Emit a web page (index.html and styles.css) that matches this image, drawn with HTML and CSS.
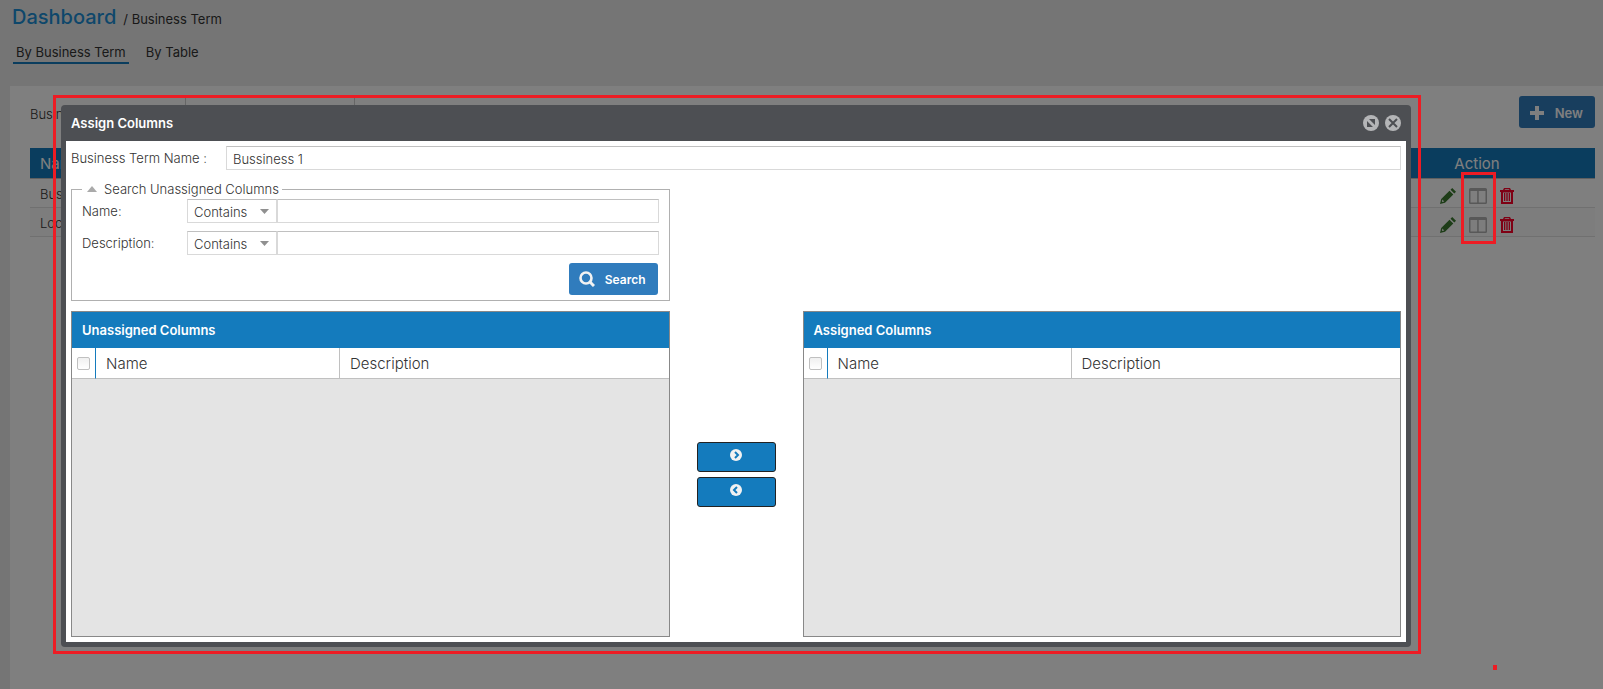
FILE: index.html
```
<!DOCTYPE html>
<html lang="en">

<head>
    <meta charset="UTF-8">
    <meta name="viewport" content="width=device-width, initial-scale=1.0">
    <title>Business Term</title>
    <link rel="stylesheet" href="styles.css">
</head>

<body>
    <svg class="defs" aria-hidden="true">
        <symbol id="pencil" viewBox="0 0 16 16">
            <path d="M10.500 1.700 12.200 0 16 3.800 14.300 5.500zM9.500 2.700 13.300 6.500 5 14.800 0 16 1.200 11zM2.400 11.600 1.900 14l2.300-.5z" fill-rule="evenodd" />
        </symbol>
        <symbol id="columns" viewBox="0 0 18 16">
            <path d="M1.500 0h15A1.500 1.500 0 0 1 18 1.500v13a1.500 1.500 0 0 1-1.500 1.500h-15A1.500 1.500 0 0 1 0 14.500v-13A1.500 1.500 0 0 1 1.500 0zM1.500 3v11.500h6.700V3zM9.700 3v11.500h6.800V3z" fill-rule="evenodd" />
        </symbol>
        <symbol id="trash" viewBox="0 0 14 16">
            <path d="M4 0h6l1 2h3v2h-1v12H1V4H0V2h3zM5 1.200 4.600 2h4.800L9 1.200zM3 4.500V14h8V4.500zM4 5h1.300v8H4zM6.300 5h1.400v8H6.300zM8.700 5H10v8H8.700z" fill-rule="evenodd" />
        </symbol>
    </svg>

    <div class="page">
        <header class="header">
            <h1 class="crumbs"><a href="#">Dashboard</a><span>/ Business Term</span></h1>
            <nav class="tabs">
                <a class="tab active" href="#">By Business Term</a>
                <a class="tab" href="#">By Table</a>
            </nav>
        </header>

        <main class="content">
            <div class="toolbar">
                <label class="filter" for="term">Business Term</label>
                <input class="filterInput" id="term" type="text">
                <button class="newBtn" type="button">
                    <svg width="14" height="14" viewBox="0 0 14 14"><path d="M5 0h4v5h5v4H9v5H5V9H0V5h5z" /></svg>
                    New
                </button>
            </div>
            <table class="terms">
                <thead>
                    <tr><th>Name</th><th class="action">Action</th></tr>
                </thead>
                <tbody>
                    <tr>
                        <td>Business 1</td>
                        <td class="action">
                            <div class="icons">
                                <button type="button" class="edit" aria-label="Edit"><svg width="16" height="16"><use href="#pencil" /></svg></button>
                                <button type="button" class="assign" aria-label="Assign columns"><svg width="18" height="16"><use href="#columns" /></svg></button>
                                <button type="button" class="delete" aria-label="Delete"><svg width="14" height="16"><use href="#trash" /></svg></button>
                            </div>
                        </td>
                    </tr>
                    <tr>
                        <td>Location</td>
                        <td class="action">
                            <div class="icons">
                                <button type="button" class="edit" aria-label="Edit"><svg width="16" height="16"><use href="#pencil" /></svg></button>
                                <button type="button" class="assign" aria-label="Assign columns"><svg width="18" height="16"><use href="#columns" /></svg></button>
                                <button type="button" class="delete" aria-label="Delete"><svg width="14" height="16"><use href="#trash" /></svg></button>
                            </div>
                        </td>
                    </tr>
                </tbody>
            </table>
        </main>
    </div>

    <div class="backdrop"></div>

    <section class="dialog" role="dialog" aria-labelledby="dialogTitle">
        <div class="dialogHead">
            <h2 id="dialogTitle">Assign Columns</h2>
            <button type="button" aria-label="Maximize">
                <svg width="16" height="16" viewBox="0 0 16 16"><circle cx="8" cy="8" r="8" fill="#b4b5b7" /><path d="M6 4h6v6zM4 6v6h6z" fill="#4d4f53" /></svg>
            </button>
            <button type="button" aria-label="Close">
                <svg width="16" height="16" viewBox="0 0 16 16"><circle cx="8" cy="8" r="8" fill="#b4b5b7" /><path d="m4 4 8 8M12 4l-8 8" stroke="#4d4f53" stroke-width="2" /></svg>
            </button>
        </div>
        <div class="dialogBody">
            <div class="termRow">
                <label for="termName">Business Term Name :</label>
                <input id="termName" type="text" value="Bussiness 1">
            </div>

            <fieldset class="search">
                <legend>
                    <svg width="10" height="6" viewBox="0 0 10 6"><path d="M5 0l5 6H0z" fill="#aaa" /></svg>
                    Search Unassigned Columns
                </legend>
                <div class="searchRow">
                    <label for="name">Name:</label>
                    <div class="selectBox">
                        <select aria-label="Name match"><option>Contains</option></select>
                        <svg width="9" height="5" viewBox="0 0 9 5"><path d="M0 0h9L4.500 5z" /></svg>
                    </div>
                    <input id="name" type="text">
                </div>
                <div class="searchRow">
                    <label for="desc">Description:</label>
                    <div class="selectBox">
                        <select aria-label="Description match"><option>Contains</option></select>
                        <svg width="9" height="5" viewBox="0 0 9 5"><path d="M0 0h9L4.500 5z" /></svg>
                    </div>
                    <input id="desc" type="text">
                </div>
                <button class="searchBtn" type="button">
                    <svg width="16" height="16" viewBox="0 0 16 16" fill="none" stroke="#f2f2f2"><circle cx="7" cy="7" r="5.500" stroke-width="2.600" /><path d="m11 11 4 4" stroke-width="3" /></svg>
                    Search
                </button>
            </fieldset>

            <div class="lists">
                <div class="list">
                    <h3>Unassigned Columns</h3>
                    <table>
                        <tr>
                            <th class="check"><input type="checkbox" aria-label="Select all unassigned"></th>
                            <th class="name">Name</th>
                            <th>Description</th>
                        </tr>
                    </table>
                </div>
                <div class="movers">
                    <button type="button" aria-label="Assign">
                        <svg width="12" height="12" viewBox="0 0 12 12"><circle cx="6" cy="6" r="6" fill="#f2f2f2" /><path d="M5 3l3 3-3 3" fill="none" stroke="#147bbd" stroke-width="2" /></svg>
                    </button>
                    <button type="button" aria-label="Unassign">
                        <svg width="12" height="12" viewBox="0 0 12 12"><circle cx="6" cy="6" r="6" fill="#f2f2f2" /><path d="M7 3L4 6l3 3" fill="none" stroke="#147bbd" stroke-width="2" /></svg>
                    </button>
                </div>
                <div class="list">
                    <h3>Assigned Columns</h3>
                    <table>
                        <tr>
                            <th class="check"><input type="checkbox" aria-label="Select all assigned"></th>
                            <th class="name">Name</th>
                            <th>Description</th>
                        </tr>
                    </table>
                </div>
            </div>
        </div>
    </section>

    <div class="mark markDialog"></div>
    <div class="mark markIcons"></div>
    <div class="dot"></div>
</body>

</html>
```
FILE: styles.css
```
* {
    box-sizing: border-box;
}

body {
    margin: 0;
    min-height: 100vh;
    background: #ebebeb;
    color: #333;
    font-family: Inter, "Open Sans", sans-serif;
    font-size: 13px;
}

input,
select,
button {
    font: inherit;
    color: inherit;
}

button {
    padding: 0;
    border: 0;
    background: none;
    cursor: pointer;
}

svg {
    display: block;
    flex: none;
}

a {
    color: inherit;
    text-decoration: none;
}

.defs {
    position: absolute;
    width: 0;
    height: 0;
}

.page {
    display: flex;
    flex-direction: column;
    min-height: 100vh;
}

.header {
    height: 86px;
    padding: 4px 12px;
}

.crumbs {
    margin: 0 0 10px;
    font-size: 13px;
    font-weight: 400;
    line-height: 26px;
}

.crumbs a {
    margin-right: 7px;
    color: #1d8fd6;
    font-size: 20px;
    font-weight: 500;
}

.tabs {
    display: flex;
    gap: 14px;
    padding-left: 1px;
    line-height: 20px;
}

.tab {
    padding: 0 3px;
    border-bottom: 2px solid transparent;
}

.tab.active {
    border-color: #147bbd;
}

.content {
    flex: 1;
    margin-left: 10px;
    padding: 10px 8px 0 20px;
    background: #fff;
}

.toolbar {
    display: flex;
    align-items: center;
    height: 32px;
    margin-bottom: 20px;
}

.filter {
    width: 155px;
    padding-top: 3px;
    font-weight: 300;
}

.filterInput {
    width: 170px;
    height: 32px;
    border: 1px solid #ccc;
}

.newBtn {
    display: flex;
    align-items: center;
    gap: 11px;
    height: 32px;
    margin-left: auto;
    padding: 1px 12px 0 11px;
    border-radius: 3px;
    background: #307cbd;
    color: #fff;
    font-weight: 600;
}

.newBtn svg {
    fill: #fff;
}

.terms {
    width: 100%;
    border-spacing: 0;
}

.terms th {
    height: 31px;
    padding: 0 10px;
    border-bottom: 1px solid #c0c0c0;
    background: #147bbd;
    background-clip: padding-box;
    color: #fff;
    font-size: 15px;
    font-weight: 400;
    text-align: left;
}

.terms td {
    height: 29px;
    padding: 2px 10px 0;
    border-bottom: 1px solid #e0e0e0;
    font-weight: 300;
}

.terms tbody tr:nth-child(2) {
    background: #fafafa;
}

.terms .action {
    width: 236px;
    text-align: center;
}

.icons {
    display: flex;
    justify-content: center;
    gap: 13px;
    padding-top: 3px;
}

.edit {
    fill: #3c7a30;
}

.assign {
    fill: #b0b0b0;
}

.delete {
    fill: #ff0028;
}

.backdrop {
    position: fixed;
    inset: 0;
    background: rgba(0, 0, 0, .5);
}

.dialog {
    position: absolute;
    top: 105px;
    left: 61px;
    right: 192px;
    bottom: 42px;
    display: flex;
    flex-direction: column;
    padding: 0 5px 5px;
    border-radius: 4px;
    background: #4d4f53;
    font-weight: 300;
}

.dialogHead {
    display: flex;
    align-items: center;
    gap: 6px;
    height: 36px;
    padding: 0 5px;
}

.dialogHead h2 {
    flex: 1;
    margin: 0;
    color: #fff;
    font-size: 13px;
    font-weight: 600;
}

.dialogBody {
    flex: 1;
    display: flex;
    flex-direction: column;
    padding: 5px;
    background: #fff;
}

.dialogBody input[type="text"] {
    flex: 1;
    min-width: 0;
    height: 24px;
    padding: 2px 6px 0;
    border: 1px solid #d9d9d9;
    border-top-color: #c0c0c0;
    outline: 0;
}

.termRow {
    display: flex;
    align-items: center;
    margin-bottom: 11px;
}

.termRow label {
    width: 155px;
}

.search {
    width: 45%;
    margin: 0 0 10px;
    padding: 0 10px 5px;
    border: 1px solid #b0b0b0;
}

.search legend {
    display: flex;
    align-items: center;
    gap: 12px;
    height: 16px;
    padding: 0 3px 0 5px;
    font-size: 13px;
}

.search legend svg {
    margin-right: -5px;
}

.searchRow {
    display: flex;
    align-items: center;
    margin-bottom: 8px;
}

.search legend + .searchRow {
    margin-top: 2px;
}

.searchRow label {
    width: 105px;
}

.selectBox {
    position: relative;
    width: 90px;
    height: 24px;
    border: 1px solid #d9d9d9;
    border-top-color: #c0c0c0;
}

.selectBox select {
    width: 61px;
    height: 22px;
    padding: 2px 0 0 6px;
    border: 0;
    outline: 0;
    background: none;
    appearance: none;
}

.selectBox svg {
    position: absolute;
    top: 9px;
    right: 7px;
    fill: #909090;
    pointer-events: none;
}

.searchBtn {
    display: flex;
    align-items: center;
    gap: 10px;
    height: 32px;
    margin: 0 1px 0 auto;
    padding: 0 12px 0 10px;
    border-radius: 3px;
    background: #307cbd;
    color: #fff;
    font-size: 12px;
    font-weight: 600;
}

.lists {
    flex: 1;
    display: flex;
}

.list {
    width: 45%;
    border: 1px solid #888;
    background: #e4e4e4;
}

.list h3 {
    margin: 0;
    padding: 0 10px;
    background: #147bbd;
    color: #fff;
    font-size: 13px;
    font-weight: 600;
    line-height: 36px;
}

.list table {
    width: 100%;
    border-spacing: 0;
    table-layout: fixed;
    background: #fff;
}

.list th {
    height: 31px;
    padding: 0 10px;
    border-bottom: 1px solid #c0c0c0;
    font-size: 15px;
    font-weight: 300;
    text-align: left;
}

.list .check {
    width: 24px;
    padding: 0 5px;
    border-right: 1px solid #147bbd;
}

.list .name {
    width: 244px;
    border-right: 1px solid #c0c0c0;
}

.check input {
    display: block;
    width: 13px;
    height: 13px;
    margin: 0;
    border: 1px solid #c0c0c0;
    border-radius: 2px;
    background: linear-gradient(#f0f0f0, #fff);
    appearance: none;
}

.movers {
    flex: 1;
    display: flex;
    flex-direction: column;
    align-items: center;
    justify-content: center;
    gap: 5px;
}

.movers button {
    display: flex;
    justify-content: center;
    width: 79px;
    height: 30px;
    padding-top: 6px;
    border: 1px solid #222;
    border-radius: 3px;
    background: #147bbd;
}

/* callout frames */
.mark {
    position: absolute;
    border: 3px solid #ed1c24;
    pointer-events: none;
}

.markDialog {
    top: 95px;
    left: 53px;
    right: 182px;
    bottom: 35px;
}

.markIcons {
    top: 172px;
    right: 107px;
    width: 35px;
    height: 72px;
}

.dot {
    position: absolute;
    right: 106px;
    bottom: 19px;
    width: 4px;
    height: 5px;
    background: #ed1c24;
}
```
